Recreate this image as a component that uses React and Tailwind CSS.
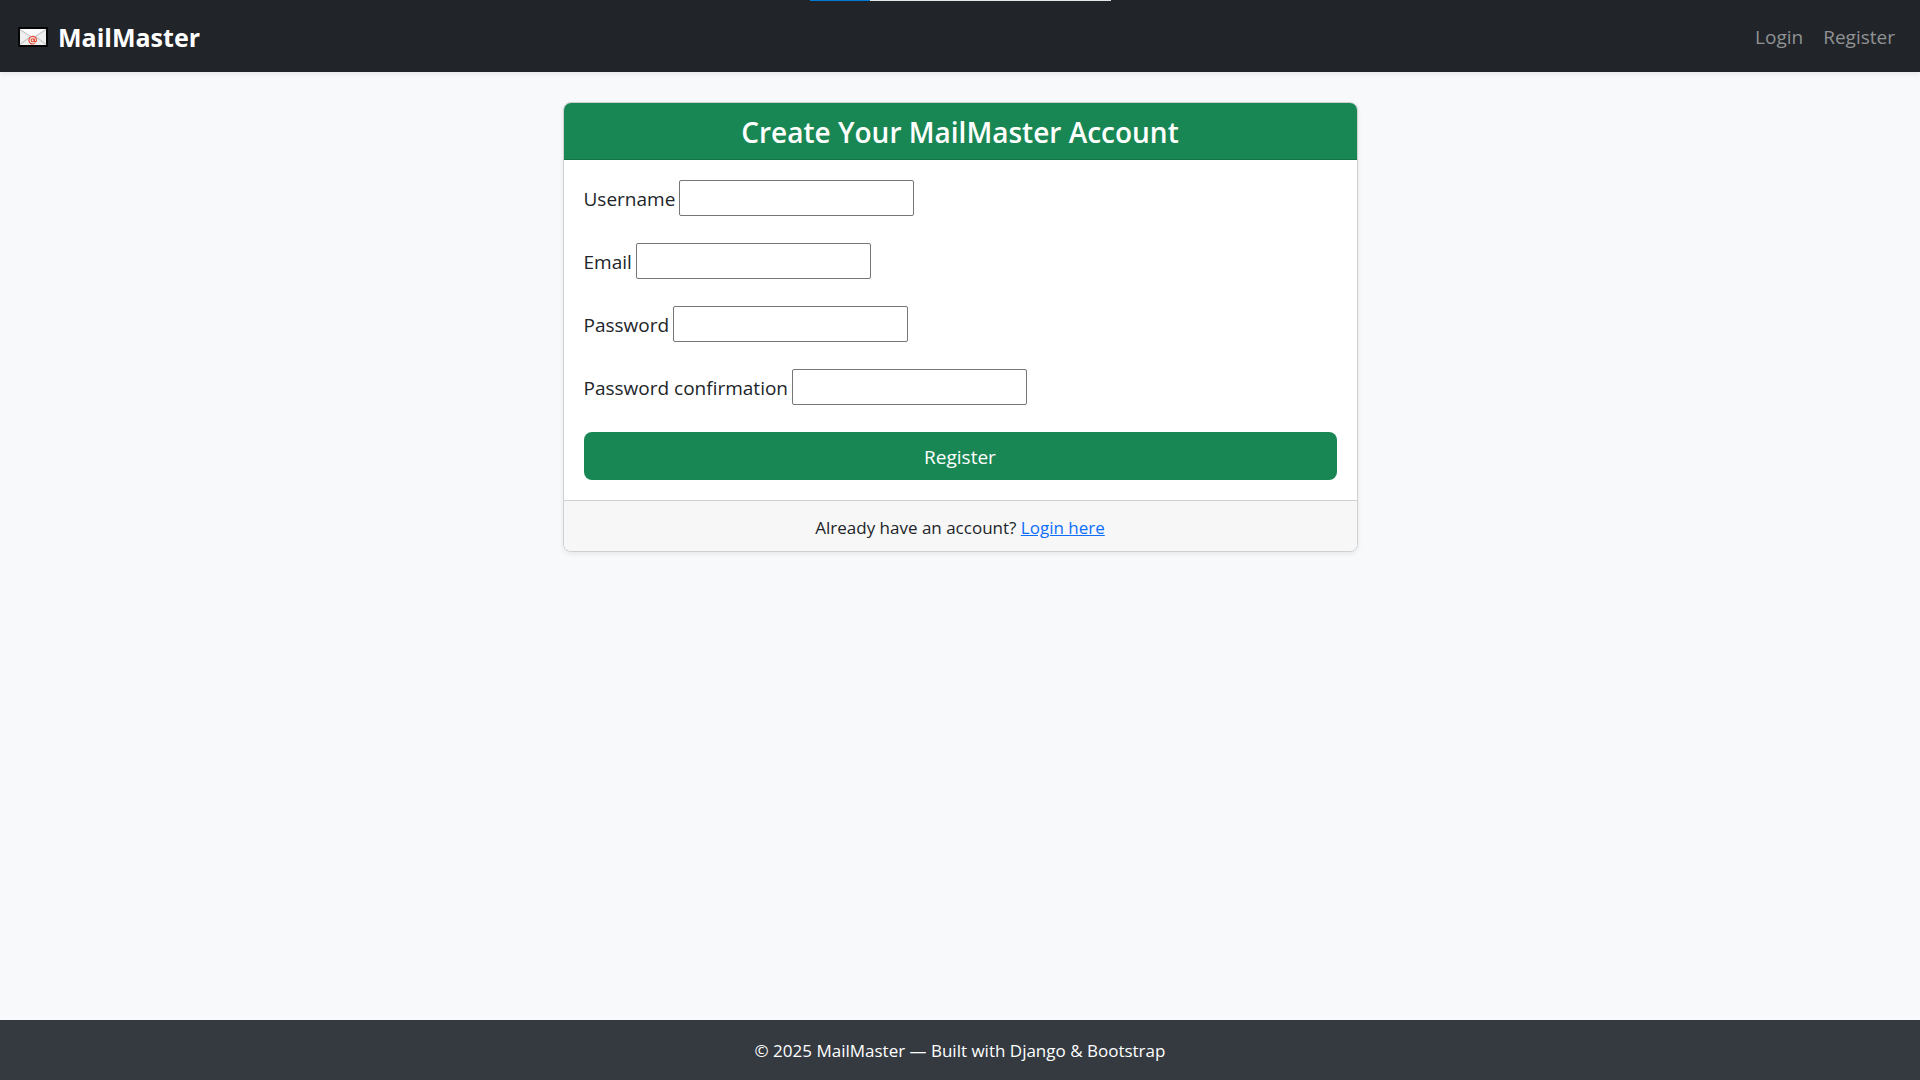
const fields = [
  { id: "username", label: "Username", type: "text" },
  { id: "email", label: "Email", type: "email" },
  { id: "password1", label: "Password", type: "password" },
  { id: "password2", label: "Password confirmation", type: "password" },
];

function EnvelopeIcon() {
  return (
    <svg width="30" height="20" viewBox="0 0 30 20" aria-hidden="true">
      <rect width="30" height="20" rx="1" fill="#050505" />
      <rect x="2" y="2" width="26" height="16" fill="#efefef" />
      <path d="M2 2h26L15 11z" fill="#fbfbfb" />
      <path d="M2 2.500l10.500 7L2 17.500M28 2.500l-10.500 7L28 17.500" fill="none" stroke="#c9c9c9" strokeWidth="1.200" />
      <circle cx="14.700" cy="13.300" r="1.500" fill="none" stroke="#e8452c" strokeWidth="1.100" />
      <path
        d="M16.300 11.700v2.300c0 1.400 2.200 1.200 2.200-.8a3.800 3.800 0 1 0-1.700 3.200"
        fill="none"
        stroke="#e8452c"
        strokeWidth="1.100"
      />
    </svg>
  );
}

export default function App() {
  return (
    <div className="relative flex min-h-screen flex-col bg-[#f8f9fa] font-['Open_Sans',sans-serif] text-[19px] leading-[30px] text-[#212529]">
      <div className="absolute inset-x-0 top-0 flex justify-center" aria-hidden="true">
        <div className="h-px w-[60px] bg-[#0078d7]" />
        <div className="h-px w-[241px] bg-[#e6e6e6]" />
      </div>

      <nav className="flex items-center justify-between bg-[#212529] pt-[22px] pr-[25px] pb-5 pl-[18px] shadow-[0_2px_5px_rgba(0,0,0,0.075)]">
        <a href="#" className="flex items-center gap-[10px] text-[25px] font-bold text-white">
          <EnvelopeIcon />
          MailMaster
        </a>
        <div className="flex gap-5 text-[#909294]">
          <a href="#login">Login</a>
          <a href="#register">Register</a>
        </div>
      </nav>

      <main className="flex flex-1 items-start justify-center pt-[30px]">
        <section className="w-[795px] max-w-full overflow-hidden rounded-lg border border-[#cfd0d1] bg-white shadow-[0_2px_5px_rgba(0,0,0,0.075)]">
          <h1 className="border-b border-[#167347] bg-[#198754] pt-[11px] pb-[9px] text-center text-[28px] leading-9 font-semibold text-white">
            Create Your MailMaster Account
          </h1>
          <form className="p-5" onSubmit={(e) => e.preventDefault()}>
            {fields.map((f) => (
              <div key={f.id} className="mb-[27px] flex h-9 items-center gap-1">
                <label htmlFor={f.id} className="pt-[2px]">{f.label}</label>
                <input
                  id={f.id}
                  type={f.type}
                  className="h-9 w-[235px] rounded-[2px] border border-[#767676] bg-white px-1"
                />
              </div>
            ))}
            <button type="submit" className="w-full rounded-lg bg-[#198754] pt-[10px] pb-2 text-white">
              Register
            </button>
          </form>
          <div className="border-t border-[#cfd0d1] bg-[#f7f7f7] pt-3 pb-2 text-center text-[17px]">
            Already have an account?{" "}
            <a href="#login" className="text-[#0d6efd] underline">
              Login here
            </a>
          </div>
        </section>
      </main>

      <footer className="bg-[#343a40] pt-4 pb-[14px] text-center text-[17px] text-white">
        © 2025 MailMaster — Built with Django &amp; Bootstrap
      </footer>
    </div>
  );
}
